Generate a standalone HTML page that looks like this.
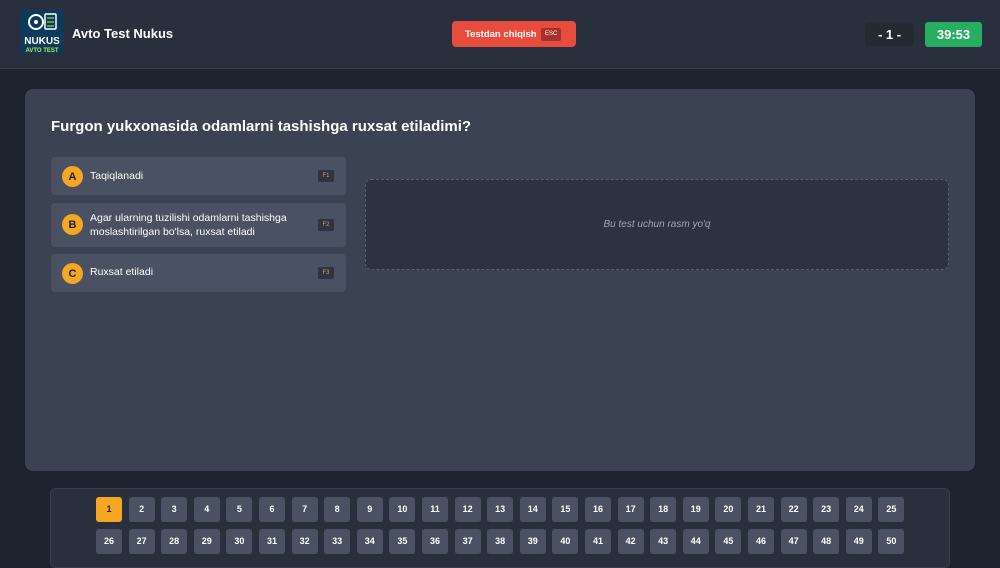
<!DOCTYPE html>
<html><head><style>
*{margin:0;padding:0;box-sizing:border-box}
body{width:1000px;height:562px;overflow:hidden;background:#1e2330;font-family:"Liberation Sans",sans-serif;position:relative}
.hdr{position:absolute;left:0;top:0;width:1000px;height:69px;background:#2a2f3d;border-bottom:1px solid #353b4a}
.logo{position:absolute;left:20px;top:10px;width:44px;height:44px;background:#0e3a5a;border-radius:3px;color:#fff;font-weight:bold;text-align:center}
.title{position:absolute;left:72px;top:26px;color:#fff;font-weight:bold;font-size:13px}
.exit{position:absolute;left:452px;top:21px;width:124px;height:26px;background:#e74c3c;border-radius:4px;color:#fff;font-size:9.5px;font-weight:bold}
.exit b{position:absolute;left:13px;top:8px;line-height:11px}
.exit span{position:absolute;left:89px;top:7px;background:#a8302a;font-size:6px;line-height:13px;padding:0 4px;border-radius:2px;font-weight:normal}
.num{position:absolute;left:865px;top:23px;width:49px;height:23px;background:#252932;border-radius:3px;color:#fff;font-weight:bold;font-size:13px;text-align:center;line-height:23px}
.time{position:absolute;left:925px;top:22px;width:57px;height:25px;background:#27ae60;border-radius:3px;color:#fff;font-weight:bold;font-size:13px;text-align:center;line-height:25px}
.card{position:absolute;left:25px;top:89px;width:950px;height:382px;background:#3b4252;border-radius:8px}
.q{position:absolute;left:51px;top:118px;color:#fff;font-weight:bold;font-size:15px}
.opt{position:absolute;left:51px;width:295px;background:#4a5163;border-radius:4px;color:#fff;font-size:10.5px}
.opt .l{position:absolute;left:11px;width:21px;height:21px;border-radius:50%;background:#f5a623;color:#1e2330;font-weight:bold;font-size:11px;text-align:center;line-height:22px}
.opt .t{position:absolute;left:39px;line-height:14px}
.opt .k{position:absolute;left:267px;width:16px;height:12px;background:#2e3342;border-radius:2px;color:#c9a560;font-size:6px;text-align:center;line-height:12px}
.img{position:absolute;left:365px;top:179px;width:584px;height:91px;background:#2c3241;border:1px dashed #555d70;border-radius:6px;color:#a0a6b4;font-style:italic;font-size:10px;text-align:center;line-height:89px}
.nav{position:absolute;left:50px;top:488px;width:900px;height:80px;background:#2a2f3d;border-radius:6px;border:1px solid #3a4050}
.b{position:absolute;width:26px;height:25px;background:#4a5163;border-radius:3px;color:#fff;font-size:9px;font-weight:bold;text-align:center;line-height:25px}
.b.a{background:#f5a623;color:#1e2330}
</style></head><body>
<div class="hdr">
<div class="logo"><svg width="44" height="24" viewBox="0 0 44 24"><circle cx="16" cy="12" r="7" fill="none" stroke="#fff" stroke-width="2"/><circle cx="16" cy="12" r="2" fill="#fff"/><rect x="25" y="4" width="11" height="15" rx="1" fill="none" stroke="#fff" stroke-width="1.5"/><path d="M27 8h7M27 12h7M27 16h7" stroke="#8fd14f" stroke-width="1.2"/></svg><div style="font-size:10px;line-height:10px;margin-top:-2px">NUKUS</div><div style="font-size:6px;color:#c6e040;line-height:8px">AVTO TEST</div></div>
<div class="title">Avto Test Nukus</div>
<div class="exit"><b>Testdan chiqish</b><span>ESC</span></div>
<div class="num">- 1 -</div>
<div class="time">39:53</div>
</div>
<div class="card"></div>
<div class="q">Furgon yukxonasida odamlarni tashishga ruxsat etiladimi?</div>
<div class="opt" style="top:157px;height:38px"><div class="l" style="top:9px">A</div><div class="t" style="top:12px">Taqiqlanadi</div><div class="k" style="top:13px">F1</div></div>
<div class="opt" style="top:203px;height:44px"><div class="l" style="top:11px">B</div><div class="t" style="top:8px">Agar ularning tuzilishi odamlarni tashishga<br>moslashtirilgan bo'lsa, ruxsat etiladi</div><div class="k" style="top:16px">F2</div></div>
<div class="opt" style="top:254px;height:38px"><div class="l" style="top:9px">C</div><div class="t" style="top:11px">Ruxsat etiladi</div><div class="k" style="top:13px">F3</div></div>
<div class="img">Bu test uchun rasm yo'q</div>
<div class="nav"></div>
<div id="g"></div>
<script>
var h='';for(var i=1;i<=50;i++){var r=i<=25?0:1,c=(i-1)%25;h+='<div class="b'+(i==1?' a':'')+'" style="left:'+(96+c*32.6)+'px;top:'+(497+r*32)+'px">'+i+'</div>';}document.getElementById('g').innerHTML=h;
</script>
</body></html>
